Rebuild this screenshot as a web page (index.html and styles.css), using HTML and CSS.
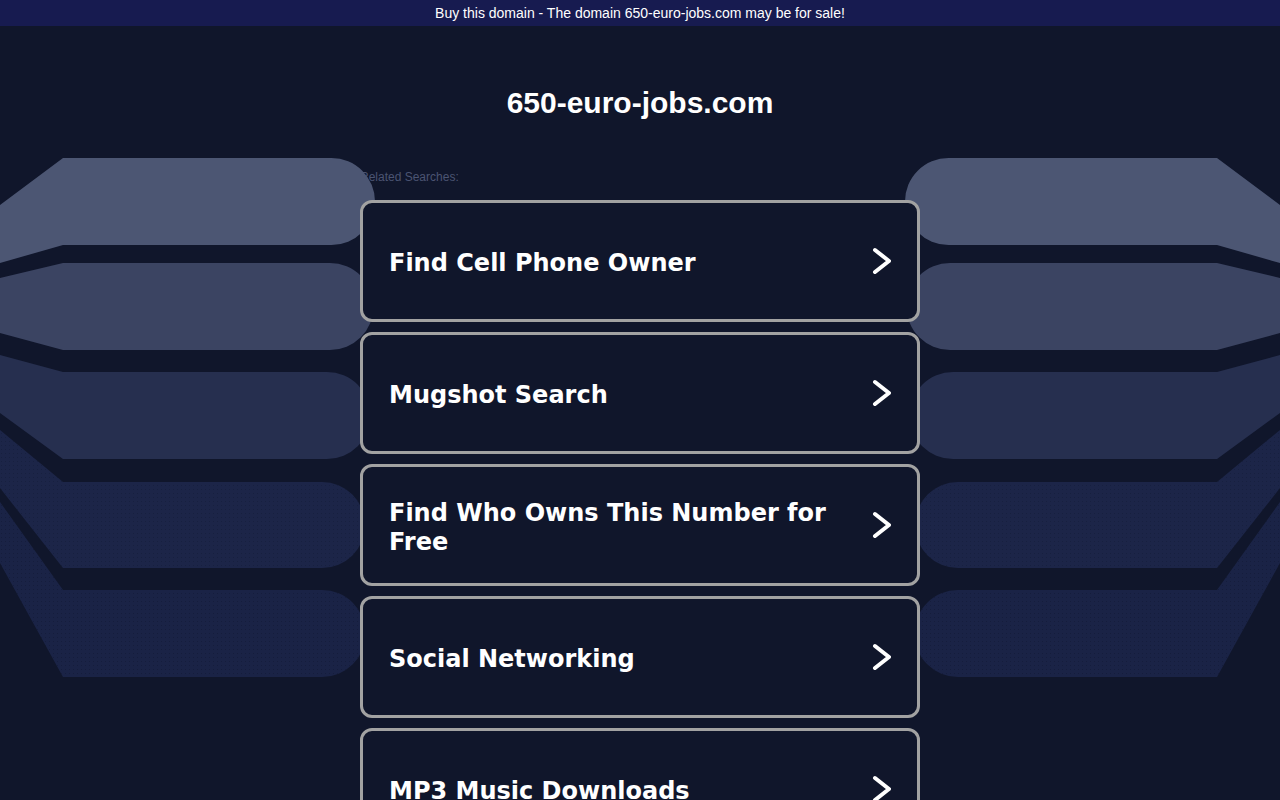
FILE: index.html
```html
<!DOCTYPE html>
<html lang="en">
<head>
<meta charset="utf-8">
<title>650-euro-jobs.com</title>
<link rel="stylesheet" href="styles.css">
</head>
<body>
<div class="topbar">Buy this domain - The domain 650-euro-jobs.com may be for sale!</div>

<svg class="deco deco-left" width="380" height="800" viewBox="0 0 380 800" aria-hidden="true">
  <defs>
    <pattern id="dotsL" width="4" height="4" patternUnits="userSpaceOnUse">
      <rect width="4" height="4" fill="#1c2548"/>
      <rect x="1" y="1" width="1" height="1" fill="#17203f"/>
    </pattern>
    <pattern id="dotsL2" width="4" height="4" patternUnits="userSpaceOnUse">
      <rect width="4" height="4" fill="#1a2346"/>
      <rect x="1" y="1" width="1" height="1" fill="#151d3c"/>
    </pattern>
  </defs>
  <path fill="#4c5673" d="M0,205 L63,158 H331.5 A43.5,43.5 0 0 1 331.5,245 H63 L0,263 Z"/>
  <path fill="#3b4462" d="M0,278 L63,263 H330 A43.5,43.5 0 0 1 330,350 H63 L0,333 Z"/>
  <path fill="#262f4f" d="M0,355 L63,372 H327 A43.5,43.5 0 0 1 327,459 H63 L0,413 Z"/>
  <path fill="url(#dotsL)" d="M0,430 L63,482 H322 A43,43 0 0 1 322,568 H63 L0,488 Z"/>
  <path fill="url(#dotsL2)" d="M0,502 L63,590 H322 A43.5,43.5 0 0 1 322,677 H63 L0,563 Z"/>
</svg>

<svg class="deco deco-right" width="380" height="800" viewBox="0 0 380 800" aria-hidden="true">
  <defs>
    <pattern id="dotsR" width="4" height="4" patternUnits="userSpaceOnUse">
      <rect width="4" height="4" fill="#1c2548"/>
      <rect x="1" y="1" width="1" height="1" fill="#17203f"/>
    </pattern>
    <pattern id="dotsR2" width="4" height="4" patternUnits="userSpaceOnUse">
      <rect width="4" height="4" fill="#1a2346"/>
      <rect x="1" y="1" width="1" height="1" fill="#151d3c"/>
    </pattern>
  </defs>
  <path fill="#4c5673" d="M0,205 L63,158 H331.5 A43.5,43.5 0 0 1 331.5,245 H63 L0,263 Z"/>
  <path fill="#3b4462" d="M0,278 L63,263 H330 A43.5,43.5 0 0 1 330,350 H63 L0,333 Z"/>
  <path fill="#262f4f" d="M0,355 L63,372 H327 A43.5,43.5 0 0 1 327,459 H63 L0,413 Z"/>
  <path fill="url(#dotsR)" d="M0,430 L63,482 H322 A43,43 0 0 1 322,568 H63 L0,488 Z"/>
  <path fill="url(#dotsR2)" d="M0,502 L63,590 H322 A43.5,43.5 0 0 1 322,677 H63 L0,563 Z"/>
</svg>

<main class="content">
  <h1 class="domain">650-euro-jobs.com</h1>
  <div class="related">Related Searches:</div>
  <ul class="links">
    <li><a class="card" href="#"><span class="card-text">Find Cell Phone Owner</span><svg class="chev" width="20" height="28" viewBox="0 0 20 28"><polyline points="4,3 18,14 4,25" fill="none" stroke="#fff" stroke-width="4" stroke-linecap="round" stroke-linejoin="round"/></svg></a></li>
    <li><a class="card" href="#"><span class="card-text">Mugshot Search</span><svg class="chev" width="20" height="28" viewBox="0 0 20 28"><polyline points="4,3 18,14 4,25" fill="none" stroke="#fff" stroke-width="4" stroke-linecap="round" stroke-linejoin="round"/></svg></a></li>
    <li><a class="card" href="#"><span class="card-text">Find Who Owns This Number for Free</span><svg class="chev" width="20" height="28" viewBox="0 0 20 28"><polyline points="4,3 18,14 4,25" fill="none" stroke="#fff" stroke-width="4" stroke-linecap="round" stroke-linejoin="round"/></svg></a></li>
    <li><a class="card" href="#"><span class="card-text">Social Networking</span><svg class="chev" width="20" height="28" viewBox="0 0 20 28"><polyline points="4,3 18,14 4,25" fill="none" stroke="#fff" stroke-width="4" stroke-linecap="round" stroke-linejoin="round"/></svg></a></li>
    <li><a class="card" href="#"><span class="card-text">MP3 Music Downloads</span><svg class="chev" width="20" height="28" viewBox="0 0 20 28"><polyline points="4,3 18,14 4,25" fill="none" stroke="#fff" stroke-width="4" stroke-linecap="round" stroke-linejoin="round"/></svg></a></li>
  </ul>
</main>
</body>
</html>
```

FILE: styles.css
```css
html, body {
  margin: 0;
  padding: 0;
}
body {
  background: #10162b;
  font-family: "Liberation Sans", Arial, sans-serif;
  color: #fff;
  overflow: hidden;
  height: 800px;
  position: relative;
}
.topbar {
  height: 26px;
  line-height: 26px;
  background: #171b50;
  color: #fff;
  font-size: 14px;
  text-align: center;
}
.deco {
  position: absolute;
  top: 0;
  z-index: 1;
}
.deco-left {
  left: 0;
}
.deco-right {
  right: 0;
  transform: scaleX(-1);
}
.content {
  width: 560px;
  margin: 0 auto;
}
.domain {
  margin: 0;
  padding-top: 59px;
  height: 36px;
  line-height: 36px;
  font-size: 30px;
  font-weight: bold;
  text-align: center;
  color: #fff;
}
.related {
  margin-top: 49px;
  font-size: 12px;
  line-height: 14px;
  color: #4b5472;
}
.links {
  list-style: none;
  margin: 16px 0 0;
  padding: 0;
  position: relative;
  z-index: 2;
}
.links li {
  margin-bottom: 10px;
}
.card {
  box-sizing: border-box;
  height: 122px;
  display: flex;
  align-items: center;
  justify-content: space-between;
  gap: 20px;
  padding: 0 26px 0 26px;
  border: 3px solid #a2a2a2;
  border-radius: 12px;
  background: #10162b;
  color: #fff;
  text-decoration: none;
}
.card-text {
  padding-top: 5px;
  font-family: "DejaVu Sans", Verdana, sans-serif;
  font-weight: bold;
  font-size: 24px;
  line-height: 29px;
}
.chev {
  flex: none;
}
```
